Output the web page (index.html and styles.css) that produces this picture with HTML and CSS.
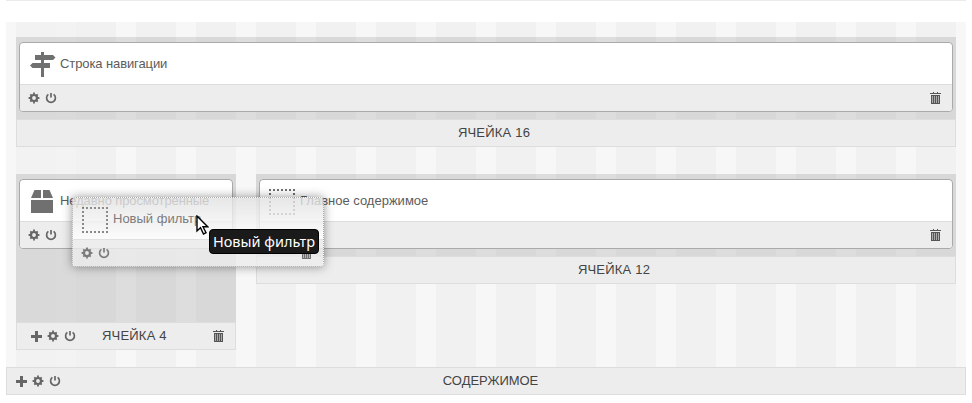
FILE: index.html
```
<!DOCTYPE html>
<html lang="ru">
<head>
<meta charset="utf-8">
<title>Содержимое</title>
<link rel="stylesheet" href="styles.css">
</head>
<body>
<svg class="defs" width="0" height="0" aria-hidden="true">
  <symbol id="gear" viewBox="0 0 12 12"><circle cx="6" cy="6" r="3" fill="none" stroke="currentColor" stroke-width="2.2"/><path d="M6 .6v2M6 9.400v2M.6 6h2M9.400 6h2M2.300 2.300l1.500 1.500M8.200 8.200l1.500 1.500M9.700 2.300L8.200 3.800M3.800 8.200L2.300 9.700" stroke="currentColor" stroke-width="1.800"/></symbol>
  <symbol id="power" viewBox="0 0 12 12"><path d="M3.400 2.400a4.400 4.400 0 1 0 5.200 0" fill="none" stroke="currentColor" stroke-width="1.700"/><path d="M6 1v4.500" stroke="currentColor" stroke-width="1.700"/></symbol>
  <symbol id="plus" viewBox="0 0 12 12"><path d="M5 1h3v4h4v3H8v4H5V8H1V5h4z" fill="currentColor"/></symbol>
  <symbol id="trash" viewBox="0 0 11 12"><path d="M0 1h11v1H0zM3 0h1v1H3zM7 0h1v1H7zM1 3h9v9H1z" fill="currentColor"/><path d="M2.500 4v7M4.500 4v7M6.500 4v7M8.500 4v7" stroke="#aaa"/></symbol>
  <symbol id="sign" viewBox="0 0 26 26"><path d="M11 0h3v3h9l2.500 2.500L23 8h-9v3h6v5h-6v9h-3v-9H2.500L0 13.500 2.500 11H11V8H5V3h6z" fill="currentColor"/></symbol>
  <symbol id="box" viewBox="0 0 22 23"><path d="M3.500 0H10v8H0zM12 0h6.500L22 8H12zM0 10h22v13H0z" fill="currentColor"/></symbol>
  <symbol id="frame" viewBox="0 0 26 26"><path d="M0 1h26M0 25h26M1 0v26M25 0v26" fill="none" stroke="currentColor" stroke-width="2" stroke-dasharray="2"/></symbol>
</svg>
<main class="grid">
  <section class="cell">
    <div class="slot">
      <article class="widget">
        <header><svg class="pic"><use href="#sign"/></svg><span class="snug">Строка навигации</span></header>
        <footer><svg class="tool"><use href="#gear"/></svg><svg class="tool"><use href="#power"/></svg><svg class="trash"><use href="#trash"/></svg></footer>
      </article>
    </div>
    <div class="bar label">ЯЧЕЙКА 16</div>
  </section>
  <div class="row">
    <section class="cell narrow">
      <div class="slot tall">
        <article class="widget">
          <header><svg class="pic boxed"><use href="#box"/></svg><span class="snug">Недавно просмотренные</span></header>
          <footer><svg class="tool"><use href="#gear"/></svg><svg class="tool"><use href="#power"/></svg></footer>
        </article>
      </div>
      <div class="bar tools"><svg class="tool"><use href="#plus"/></svg><svg class="tool"><use href="#gear"/></svg><svg class="tool"><use href="#power"/></svg><span>ЯЧЕЙКА 4</span><svg class="trash"><use href="#trash"/></svg></div>
    </section>
    <section class="cell wide">
      <div class="slot">
        <article class="widget">
          <header><svg class="pic framed"><use href="#frame"/></svg><span>Главное содержимое</span></header>
          <footer><svg class="tool"><use href="#gear"/></svg><svg class="tool"><use href="#power"/></svg><svg class="trash"><use href="#trash"/></svg></footer>
        </article>
      </div>
      <div class="bar label">ЯЧЕЙКА 12</div>
    </section>
  </div>
  <div class="bar root"><svg class="tool"><use href="#plus"/></svg><svg class="tool"><use href="#gear"/></svg><svg class="tool"><use href="#power"/></svg><span>СОДЕРЖИМОЕ</span></div>
</main>
<article class="widget dragged">
  <header><svg class="pic framed"><use href="#frame"/></svg><span>Новый фильтр</span></header>
  <footer><svg class="tool"><use href="#gear"/></svg><svg class="tool"><use href="#power"/></svg><svg class="trash"><use href="#trash"/></svg></footer>
</article>
<div class="tip">Новый фильтр</div>
<svg class="cursor" viewBox="0 0 13 20"><path d="M1 1v15l3.500-3.300 3 6.300 2.500-1.200-3-6H11.700z" fill="#fff" stroke="#000" stroke-width="1.400"/></svg>
</body>
</html>
```

FILE: styles.css
```
* { box-sizing: border-box; }
body {
  margin: 0;
  height: 403px;
  padding: 0 6px;
  overflow: hidden;
  background: #fff;
  color: #444;
  font: 13px/18px "Liberation Sans", Arial, sans-serif;
}
body::before {
  content: "";
  display: block;
  height: 1px;
  margin-bottom: 21px;
  background: #ebebeb;
}
.defs { position: absolute; }
.grid {
  height: 373px;
  padding-top: 15px;
  background:
    linear-gradient(90deg, #f2f2f2 40px, #f3f3f3 40px) 10px 0 / 60px 100% no-repeat,
    repeating-linear-gradient(90deg, #f7f7f7 0 10px, #f1f1f1 10px 50px, #f7f7f7 50px 60px);
}
.cell { margin: 0 10px; }
.slot {
  height: 82px;
  padding: 5px 3px 0;
  background: rgba(0, 0, 0, .1);
}
.tall { height: 148px; }
.row {
  display: flex;
  gap: 20px;
  height: 193px;
  margin: 27px 10px 0;
}
.row .cell { margin: 0; }
.narrow { width: 220px; }
.wide { flex: 1; }
.widget {
  height: 70px;
  overflow: hidden;
  border: 1px solid #aaa;
  border-radius: 4px;
  background: #fff;
  color: #5c5c5c;
}
.widget header {
  display: flex;
  align-items: center;
  height: 41px;
  padding-left: 10px;
  white-space: nowrap;
}
.widget header span { margin-left: 4px; }
.snug { letter-spacing: -.1px; }
.pic { width: 26px; height: 26px; color: #707070; margin-top: 2px; }
.boxed { width: 22px; height: 23px; margin: 2px 3px 0 1px; }
.framed { margin-left: -1px; margin-right: 1px; }
.widget footer {
  display: flex;
  align-items: center;
  gap: 5px;
  height: 27px;
  padding: 0 11px 0 8px;
  border-top: 1px solid #ddd;
  background: #ededed;
}
.tool { width: 12px; height: 12px; color: #666; }
.trash { width: 11px; height: 12px; margin-left: auto; color: #555; }
.bar {
  display: flex;
  align-items: center;
  justify-content: center;
  height: 28px;
  border: 1px solid #ddd;
  background: #ededed;
}
.label { padding-left: 16px; letter-spacing: .2px; }
.tools { gap: 5px; padding: 0 11px 0 13px; }
.tools span { margin-left: 21px; letter-spacing: .2px; }
.root { gap: 5px; padding: 0 50px 0 8px; }
.root span { flex: 1; text-align: center; letter-spacing: -.05px; }
.dragged {
  position: absolute;
  left: 72px;
  top: 197px;
  width: 252px;
  border: 1px dotted #999;
  background: linear-gradient(#e2e2e2, #fff 40px);
  box-shadow: 0 0 10px rgba(0, 0, 0, .5);
  opacity: .8;
}
.tip {
  position: absolute;
  left: 209px;
  top: 229px;
  width: 110px;
  height: 25px;
  border: 1px solid #000;
  border-radius: 4px;
  background: #1a1a1a;
  color: #fff;
  font: 14.5px/23px "Noto Sans", sans-serif;
  text-align: center;
  white-space: nowrap;
}
.cursor { position: absolute; left: 196px; top: 215px; width: 13px; height: 20px; }
```
